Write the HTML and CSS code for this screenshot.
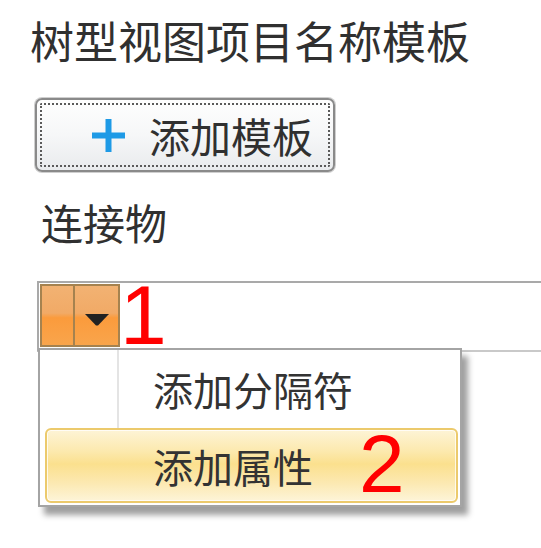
FILE: index.html
```html
<!DOCTYPE html>
<html lang="zh-CN">
<head>
<meta charset="utf-8">
<title>树型视图项目名称模板</title>
<link rel="stylesheet" href="styles.css">
</head>
<body>
<div class="panel">
  <div class="title">树型视图项目名称模板</div>
  <button class="add-btn" type="button">
    <svg class="plus" viewBox="0 0 35 35" width="35" height="35" aria-hidden="true">
      <path d="M17.5 1 V34 M1 17.5 H34" stroke="#1e9ae6" stroke-width="6" fill="none"/>
    </svg>
    <span class="btn-text">添加模板</span>
  </button>
  <div class="label">连接物</div>
  <div class="combo">
    <div class="tokens">
      <span class="seg seg-left"></span>
      <span class="seg seg-drop">
        <svg viewBox="0 0 24 12" width="24" height="12" aria-hidden="true">
          <path d="M0 0 H24 L13 11.5 H11 Z" fill="#222"/>
        </svg>
      </span>
    </div>
    <span class="num num-one">1</span>
    <div class="menu">
      <div class="menu-item">添加分隔符</div>
      <div class="menu-item active"><span class="item-text">添加属性</span><span class="num num-two">2</span></div>
    </div>
  </div>
</div>
</body>
</html>
```
FILE: styles.css
```css
html, body {
  margin: 0;
  padding: 0;
  background: #ffffff;
  min-height: 100%;
}

html {
  height: 100%;
}

body {
  font-family: "Noto Sans CJK SC", "Microsoft YaHei", sans-serif;
  color: #303030;
}

.panel {
  box-sizing: border-box;
  min-height: 548px;
  padding-top: 18px;
}

.title {
  font-size: 44px;
  line-height: 44px;
  margin-left: 30px;
  white-space: nowrap;
}

.add-btn {
  position: relative;
  display: flex;
  align-items: center;
  box-sizing: border-box;
  width: 300px;
  height: 74px;
  margin: 36px 0 0 35px;
  padding: 0 0 0 54px;
  border: 2px solid #8a8a8a;
  border-radius: 7px;
  box-shadow: 0 0 0 1px #cfcfcf;
  background: linear-gradient(#fefefe 0%, #f6f7f8 50%, #e9ebed 100%);
  font-family: inherit;
  color: #303030;
  cursor: default;
}

.add-btn::after {
  content: "";
  position: absolute;
  inset: 3px;
  border: 2px dotted #5a5a5a;
  border-radius: 2px;
}

.plus {
  flex: none;
  display: block;
}

.btn-text {
  margin-left: 23px;
  font-size: 41px;
  line-height: 41px;
  white-space: nowrap;
}

.label {
  font-size: 42px;
  line-height: 42px;
  margin: 29px 0 0 41px;
  white-space: nowrap;
}

.combo {
  position: relative;
  display: flex;
  align-items: flex-start;
  box-sizing: border-box;
  height: 71px;
  margin: 38px 0 0 37px;
  padding: 1px 0 0 1px;
  border: 2px solid #a9a9a9;
  border-right: none;
  border-bottom-color: #c9c9c9;
}

.tokens {
  display: flex;
  box-sizing: border-box;
  width: 80px;
  height: 63px;
  border: 2px solid #a5824f;
  background: linear-gradient(#f2b273 0%, #f1aa66 46%, #fb9b3c 54%, #f9a54c 100%);
}

.seg {
  display: flex;
  align-items: center;
  justify-content: center;
  box-sizing: border-box;
  height: 100%;
}

.seg-left {
  width: 33px;
  border-right: 2px solid #a5824f;
}

.seg-drop {
  flex: 1;
  padding-top: 9px;
}

.seg-drop svg {
  display: block;
}

.num {
  font-family: "Liberation Sans", Arial, sans-serif;
  color: #ff0000;
  white-space: nowrap;
}

.num-one {
  font-size: 84px;
  line-height: 63px;
}

.menu {
  position: absolute;
  left: -1px;
  top: 65px;
  box-sizing: border-box;
  width: 424px;
  height: 159px;
  border: 2px solid #a4a4a4;
  background-color: #ffffff;
  background-image: linear-gradient(to right, transparent 77px, #e4e4e4 77px, #e4e4e4 79px, transparent 79px);
  background-size: 100% 78px;
  background-repeat: no-repeat;
  box-shadow: 6px 8px 6px rgba(0, 0, 0, 0.38);
  z-index: 2;
}

.menu-item {
  box-sizing: border-box;
  height: 78px;
  padding-left: 113px;
  font-size: 40px;
  line-height: 78px;
  color: #333;
  white-space: nowrap;
}

.menu-item.active {
  display: flex;
  align-items: flex-start;
  height: 75px;
  margin: 0 2px 0 5px;
  padding-left: 106px;
  line-height: 62px;
  border: 2px solid #ecca6c;
  border-radius: 6px;
  box-shadow: inset 0 0 0 1px rgba(255, 255, 255, 0.75);
  background: linear-gradient(#fdf4d6 0%, #fce9ae 30%, #fbe08e 48%, #fce9b2 75%, #fdf4d8 100%);
}

.item-text {
  padding-top: 5px;
}

.num-two {
  margin-left: 46px;
  font-size: 82px;
  line-height: 67px;
}
```
